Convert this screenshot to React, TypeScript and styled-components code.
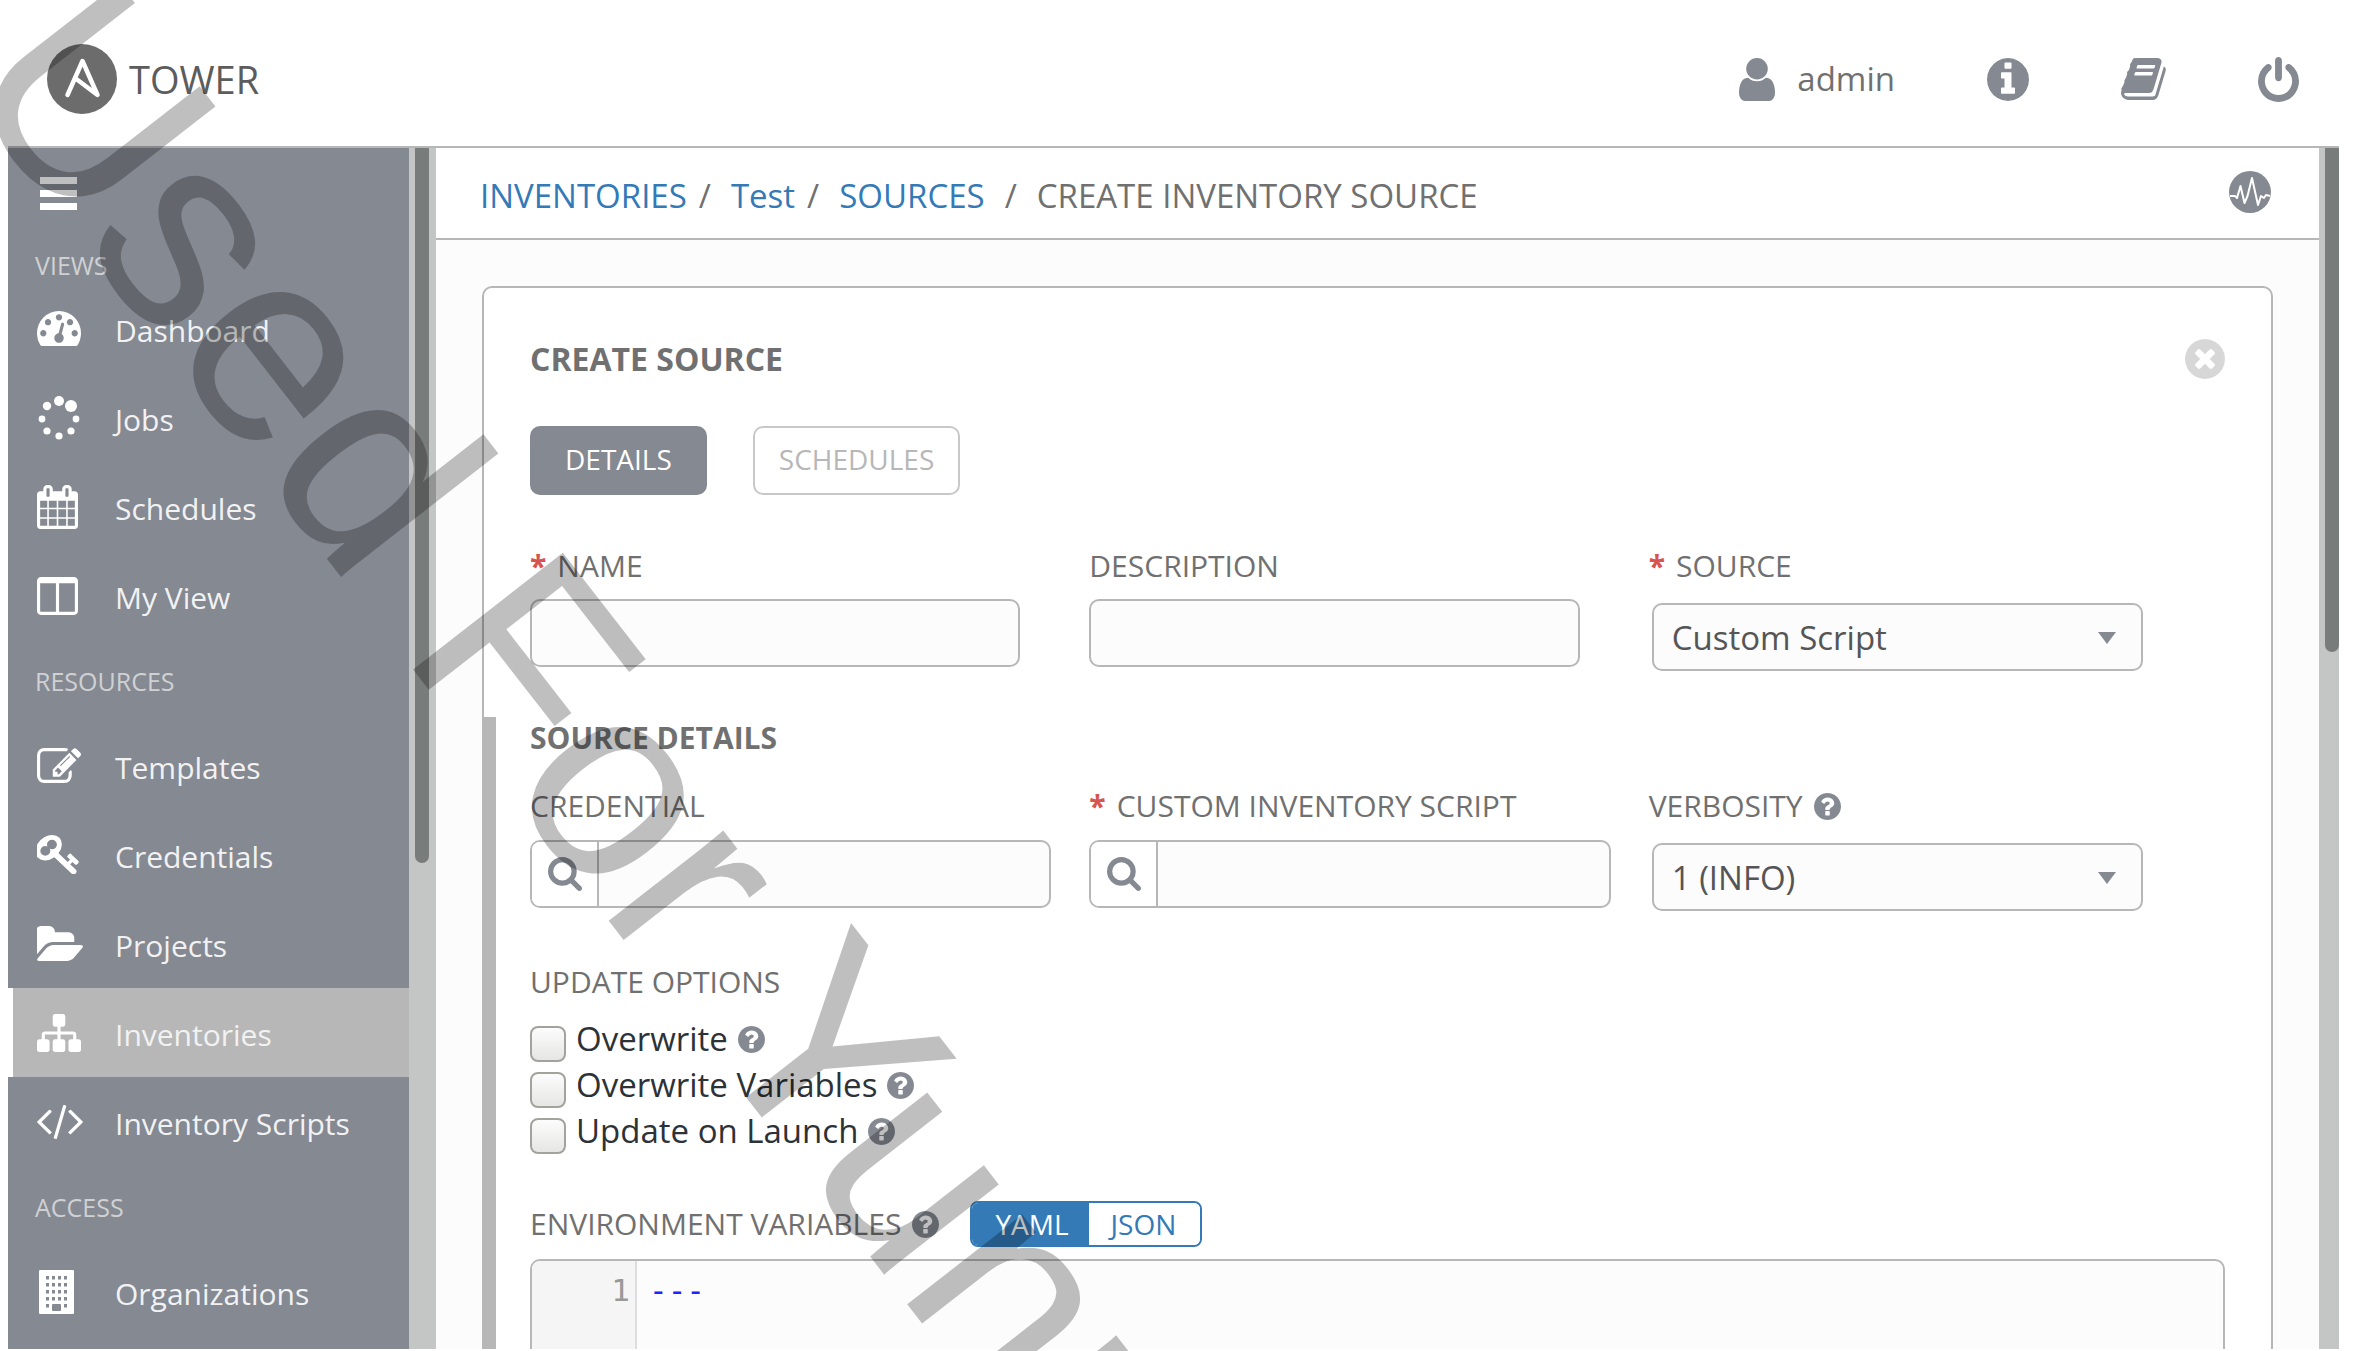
import React from 'react';
import styled, { createGlobalStyle } from 'styled-components';

const color = {
  slate: '#848992',
  line: '#b7b7b7',
  text: '#707070',
  link: '#337ab7',
  field: '#fcfcfc',
  track: '#c4c6c5',
  thumb: '#787c7b',
};

const GlobalStyle = createGlobalStyle`
  *, *::before, *::after { box-sizing: border-box; }
  body { margin: 0; background: #fff; }
  body, button, input, select { font-family: "Open Sans", "Noto Sans", sans-serif; }
`;

/* ---------- icons ---------- */

const CIRCLE =
  'M1664 896q0 209-103 385.5t-279.5 279.5-385.5 103-385.5-103-279.5-279.5-103-385.5 103-385.5 279.5-279.5 385.5-103 385.5 103 279.5 279.5 103 385.5z';

type Glyph = { box: string; w: number; h: number; d: string };

const glyphs: Record<string, Glyph> = {
  dashboard: {
    box: '0 256 1792 1408', w: 44, h: 35,
    d: 'M384 1152q0-53-37.5-90.5t-90.5-37.5-90.5 37.5-37.5 90.5 37.5 90.5 90.5 37.5 90.5-37.5 37.5-90.5zm192-448q0-53-37.5-90.5t-90.5-37.5-90.5 37.5-37.5 90.5 37.5 90.5 90.5 37.5 90.5-37.5 37.5-90.5zm428 481l101-382q6-26-7.5-48.5t-38.5-29.5-48 6.5-30 39.5l-101 382q-60 5-107 43.5t-63 98.5q-20 77 20 146t117 89 146-20 89-117q16-60-6-117t-72-91zm660-33q0-53-37.5-90.5t-90.5-37.5-90.5 37.5-37.5 90.5 37.5 90.5 90.5 37.5 90.5-37.5 37.5-90.5zm-640-640q0-53-37.5-90.5t-90.5-37.5-90.5 37.5-37.5 90.5 37.5 90.5 90.5 37.5 90.5-37.5 37.5-90.5zm448 192q0-53-37.5-90.5t-90.5-37.5-90.5 37.5-37.5 90.5 37.5 90.5 90.5 37.5 90.5-37.5 37.5-90.5zm320 448q0 261-141 483-19 29-54 29h-1402q-35 0-54-29-141-221-141-483 0-182 71-348t191-286 286-191 348-71 348 71 286 191 191 286 71 348z',
  },
  calendar: {
    box: '64 0 1664 1792', w: 41, h: 44,
    d: 'M192 1664h288v-288h-288v288zm352 0h320v-288h-320v288zm-352-352h288v-320h-288v320zm352 0h320v-320h-320v320zm-352-384h288v-288h-288v288zm736 736h320v-288h-320v288zm-384-736h320v-288h-320v288zm768 736h288v-288h-288v288zm-384-352h320v-320h-320v320zm-352-864v-288q0-13-9.5-22.5t-22.5-9.5h-64q-13 0-22.5 9.5t-9.5 22.5v288q0 13 9.5 22.5t22.5 9.5h64q13 0 22.5-9.5t9.5-22.5zm736 864h288v-320h-288v320zm-384-384h320v-288h-320v288zm384 0h288v-288h-288v288zm32-480v-288q0-13-9.5-22.5t-22.5-9.5h-64q-13 0-22.5 9.5t-9.5 22.5v288q0 13 9.5 22.5t22.5 9.5h64q13 0 22.5-9.5t9.5-22.5zm384-64v1280q0 52-38 90t-90 38h-1408q-52 0-90-38t-38-90v-1280q0-52 38-90t90-38h128v-96q0-66 47-113t113-47h64q66 0 113 47t47 113v96h384v-96q0-66 47-113t113-47h64q66 0 113 47t47 113v96h128q52 0 90 38t38 90z',
  },
  columns: {
    box: '0 128 1664 1536', w: 41, h: 38,
    d: 'M160 1536h608v-1152h-640v1120q0 13 9.5 22.5t22.5 9.5zm1376-32v-1120h-640v1152h608q13 0 22.5-9.5t9.5-22.5zm128-1216v1216q0 66-47 113t-113 47h-1344q-66 0-113-47t-47-113v-1216q0-66 47-113t113-47h1344q66 0 113 47t47 113z',
  },
  edit: {
    box: '0 128 1784 1408', w: 44, h: 35,
    d: 'M888 1184l116-116-152-152-116 116v56h96v96h56zm440-720q-16-16-33 1l-350 350q-17 17-1 33t33-1l350-350q17-17 1-33zm80 594v190q0 119-84.5 203.5t-203.5 84.5h-832q-119 0-203.5-84.5t-84.5-203.5v-832q0-119 84.5-203.5t203.5-84.5h832q63 0 117 25 15 7 18 23 3 17-9 29l-49 49q-14 14-32 8-23-6-45-6h-832q-66 0-113 47t-47 113v832q0 66 47 113t113 47h832q66 0 113-47t47-113v-126q0-13 9-22l64-64q15-15 35-7t20 29zm-96-738l288 288-672 672h-288v-288zm444 132l-92 92-288-288 92-92q28-28 68-28t68 28l152 152q28 28 28 68t-28 68z',
  },
  key: {
    box: '64 128 1620 1572', w: 42, h: 39,
    d: 'M832 512q0-80-56-136t-136-56-136 56-56 136q0 42 19 83-41-19-83-19-80 0-136 56t-56 136 56 136 136 56 136-56 56-136q0-42-19-83 41 19 83 19 80 0 136-56t56-136zm851 704q0 17-49 66t-66 49q-9 0-28.5-16t-36.5-33-38.5-40-24.5-26l-96 96 220 220q28 28 28 68 0 42-39 81t-81 39q-40 0-68-28l-671-671q-176 131-365 131-163 0-265.5-102.5t-102.5-265.5q0-160 95-313t248-248 313-95q163 0 265.5 102.5t102.5 265.5q0 189-131 365l355 355 96-96q-3-3-26-24.5t-40-38.5-33-36.5-16-28.5q0-17 49-66t66-49q13 0 23 10 6 6 46 44.5t82 79.5 86.5 86 73 78 28.5 41z',
  },
  folder: {
    box: '64 128 1816 1408', w: 46, h: 35,
    d: 'M1879 952q0 31-31 66l-336 396q-43 51-120.5 86.5t-143.5 35.5h-1088q-34 0-60.5-13t-26.5-43q0-31 31-66l336-396q43-51 120.5-86.5t143.5-35.5h1088q34 0 60.5 13t26.5 43zm-343-344v160h-832q-94 0-197 47.5t-164 119.5l-337 396-5 6q0-4-.5-12.5t-.5-12.5v-960q0-92 66-158t158-66h320q92 0 158 66t66 158v32h544q92 0 158 66t66 158z',
  },
  sitemap: {
    box: '0 128 1792 1536', w: 44, h: 38,
    d: 'M1792 1248v320q0 40-28 68t-68 28h-320q-40 0-68-28t-28-68v-320q0-40 28-68t68-28h96v-192h-512v192h96q40 0 68 28t28 68v320q0 40-28 68t-68 28h-320q-40 0-68-28t-28-68v-320q0-40 28-68t68-28h96v-192h-512v192h96q40 0 68 28t28 68v320q0 40-28 68t-68 28h-320q-40 0-68-28t-28-68v-320q0-40 28-68t68-28h96v-192q0-52 38-90t90-38h512v-192h-96q-40 0-68-28t-28-68v-320q0-40 28-68t68-28h320q40 0 68 28t28 68v320q0 40-28 68t-68 28h-96v192h512q52 0 90 38t38 90v192h96q40 0 68 28t28 68z',
  },
  code: {
    box: '-20 274 1832 1372', w: 46, h: 34,
    d: 'M553 1399l-50 50q-10 10-23 10t-23-10l-466-466q-10-10-10-23t10-23l466-466q10-10 23-10t23 10l50 50q10 10 10 23t-10 23l-393 393 393 393q10 10 10 23t-10 23zm591-1067l-373 1291q-4 13-15.5 19.5t-23.5 2.5l-62-17q-13-4-19.5-15.5t-2.5-24.5l373-1291q4-13 15.5-19.5t23.5-2.5l62 17q13 4 19.5 15.5t2.5 24.5zm657 651l-466 466q-10 10-23 10t-23-10l-50-50q-10-10-10-23t10-23l393-393-393-393q-10-10-10-23t10-23l50-50q10-10 23-10t23 10l466 466q10 10 10 23t-10 23z',
  },
  user: {
    box: '256 128 1280 1536', w: 36, h: 43,
    d: 'M1536 1399q0 109-62.5 187t-150.5 78h-854q-88 0-150.5-78t-62.5-187q0-85 8.5-160.5t31.5-152 58.5-131 94-89 134.5-34.5q131 128 313 128t313-128q76 0 134.5 34.5t94 89 58.5 131 31.5 152 8.5 160.5zm-256-887q0 159-112.5 271.5t-271.5 112.5-271.5-112.5-112.5-271.5 112.5-271.5 271.5-112.5 271.5 112.5 112.5 271.5z',
  },
  info: {
    box: '128 128 1536 1536', w: 42, h: 43,
    d: 'M1152 1376v-160q0-14-9-23t-23-9h-96v-512q0-14-9-23t-23-9h-320q-14 0-23 9t-9 23v160q0 14 9 23t23 9h96v320h-96q-14 0-23 9t-9 23v160q0 14 9 23t23 9h448q14 0 23-9t9-23zM1024 480v-160q0-14-9-23t-23-9h-192q-14 0-23 9t-9 23v160q0 14 9 23t23 9h192q14 0 23-9t9-23z' + CIRCLE,
  },
  book: {
    box: '62 128 1674 1536', w: 45, h: 42,
    d: 'M1703 478q40 57 18 129l-275 906q-19 64-76.5 107.5t-122.5 43.5h-923q-77 0-148.5-53.5t-99.5-131.5q-24-67-2-127 0-4 3-27t4-37q1-8-3-21.5t-3-19.5q2-11 8-21t16.5-23.5 16.5-23.5q23-38 45-91.5t30-91.5q3-10 .5-30t-.5-28q3-11 17-28t17-23q21-36 42-92t25-90q1-9-2.5-32t.5-28q4-13 22-30.5t22-22.5q19-26 42.5-84.5t27.5-96.5q1-8-3-25.5t-2-26.5q2-8 9-18t18-23 17-21q8-12 16.5-30.5t15-35 16-36 19.5-32 26.5-23.5 36-11.5 47.5 5.5l-1 3q38-9 51-9h761q74 0 114 56t18 130l-274 906q-36 119-71.5 153.5t-128.5 34.5h-869q-27 0-38 15-11 16-1 43 24 70 144 70h923q29 0 56-15.5t35-41.5l300-987q7-22 5-57 38 15 59 43zm-1064 2q-4 13 2 22.5t20 9.5h608q13 0 25.5-9.5t16.5-22.5l21-64q4-13-2-22.5t-20-9.5h-608q-13 0-25.5 9.5t-16.5 22.5zm-83 256q-4 13 2 22.5t20 9.5h608q13 0 25.5-9.5t16.5-22.5l21-64q4-13-2-22.5t-20-9.5h-608q-13 0-25.5 9.5t-16.5 22.5z',
  },
  power: {
    box: '128 0 1536 1664', w: 41, h: 45,
    d: 'M1664 896q0 156-61 298t-164 245-245 164-298 61-298-61-245-164-164-245-61-298q0-182 80.5-343t226.5-270q43-32 95.5-25t83.5 50q32 42 24.5 94.5t-49.5 84.5q-98 74-151.5 181t-53.5 228q0 104 40.5 198.5t109.5 163.5 163.5 109.5 198.5 40.5 198.5-40.5 163.5-109.5 109.5-163.5 40.5-198.5q0-121-53.5-228t-151.5-181q-42-32-49.5-84.5t24.5-94.5q31-43 84-50t95 25q146 109 226.5 270t80.5 343zm-640-768v640q0 52-38 90t-90 38-90-38-38-90v-640q0-52 38-90t90-38 90 38 38 90z',
  },
  close: {
    box: '128 128 1536 1536', w: 40, h: 40,
    d: 'M1277 1122q0-26-19-45l-181-181 181-181q19-19 19-45 0-27-19-46l-90-90q-19-19-46-19-26 0-45 19l-181 181-181-181q-19-19-45-19-27 0-46 19l-90 90q-19 19-19 46 0 26 19 45l181 181-181 181q-19 19-19 45 0 27 19 46l90 90q19 19 46 19 26 0 45-19l181-181 181 181q19 19 45 19 27 0 46-19l90-90q19-19 19-46z' + CIRCLE,
  },
  help: {
    box: '128 128 1536 1536', w: 27, h: 27,
    d: 'M1024 1376v-192q0-14-9-23t-23-9h-192q-14 0-23 9t-9 23v192q0 14 9 23t23 9h192q14 0 23-9t9-23zM1280 704q0-88-55.5-163t-138.5-116-170-41q-243 0-371 213-15 24 8 42l132 100q7 6 19 6 16 0 25-12 53-68 86-92 34-24 86-24 48 0 85.5 26t37.5 59q0 38-20 61t-68 45q-63 28-115.5 86.5t-52.5 125.5v36q0 14 9 23t23 9h192q14 0 23-9t9-23q0-19 21.5-49.5t54.5-49.5q32-18 49-28.5t46-35 44.5-48 28-60.5 12.5-81z' + CIRCLE,
  },
  search: {
    box: '64 128 1664 1664', w: 34, h: 34,
    d: 'M1216 832q0-185-131.5-316.5t-316.5-131.5-316.5 131.5-131.5 316.5 131.5 316.5 316.5 131.5 316.5-131.5 131.5-316.5zm512 832q0 52-38 90t-90 38q-54 0-90-38l-343-342q-179 124-399 124-143 0-273.5-55.5t-225-150-150-225-55.5-273.5 55.5-273.5 150-225 225-150 273.5-55.5 273.5 55.5 225 150 150 225 55.5 273.5q0 220-124 399l343 343q37 37 37 90z',
  },
};

const IconSvg = styled.svg`
  display: block;
  flex: none;
  fill: currentColor;
`;

function Icon({ name }: { name: string }) {
  if (name === 'jobs') {
    return (
      <IconSvg width="44" height="44" viewBox="0 0 44 44" aria-hidden="true">
        <circle cx="22" cy="5" r="5" />
        <circle cx="34" cy="10" r="6" />
        <circle cx="39" cy="23" r="3.4" />
        <circle cx="34" cy="35" r="3.6" />
        <circle cx="22" cy="40" r="3.6" />
        <circle cx="10" cy="35" r="3.6" />
        <circle cx="5" cy="23" r="3.4" />
        <circle cx="10" cy="10" r="4.2" />
      </IconSvg>
    );
  }
  if (name === 'building') {
    const cells = [];
    for (let r = 0; r < 5; r += 1) {
      for (let c = 0; c < 4; c += 1) {
        if (r < 4 || c === 0 || c === 3) {
          cells.push(<rect key={`${r}-${c}`} x={7 + c * 6} y={6 + r * 7} width="3" height="3.5" fill={color.slate} />);
        }
      }
    }
    return (
      <IconSvg width="38" height="44" viewBox="-2 0 38 44" aria-hidden="true">
        <rect width="35" height="44" rx="1" />
        {cells}
        <rect x="13" y="34" width="9" height="7" rx="1" fill={color.slate} />
      </IconSvg>
    );
  }
  const g = glyphs[name];
  return (
    <IconSvg width={g.w} height={g.h} viewBox={g.box} preserveAspectRatio="none" aria-hidden="true">
      <path fillRule="evenodd" d={g.d} />
    </IconSvg>
  );
}

/* ---------- shell ---------- */

const Page = styled.div`
  position: relative;
  display: flex;
  flex-direction: column;
  height: 100vh;
  padding: 0 20px 2px 8px;
  overflow: hidden;
  color: ${color.text};
  font-size: 33px;
`;

const Header = styled.header`
  display: flex;
  align-items: center;
  justify-content: space-between;
  height: 148px;
  flex: none;
  padding: 12px 40px 0 39px;
  border-bottom: 2px solid ${color.line};
`;

const Brand = styled.a`
  display: flex;
  align-items: center;
  gap: 12px;
  color: #5c5c5c;
  font-size: 38px;
  line-height: 48px;
  text-decoration: none;
`;

const HeaderNav = styled.nav`
  display: flex;
  align-items: center;
  gap: 92px;
`;

const HeaderLink = styled.a`
  display: flex;
  align-items: center;
  gap: 22px;
  color: ${color.slate};
  text-decoration: none;
`;

const UserName = styled.span`
  color: ${color.text};
  line-height: 44px;
`;

const Body = styled.div`
  display: flex;
  flex: 1;
  min-height: 0;
  overflow: hidden;
`;

const Track = styled.div<{ $width: number }>`
  width: ${(p) => p.$width}px;
  flex: none;
  padding-left: 6px;
  background: ${color.track};
`;

const Thumb = styled.div<{ $size: number }>`
  width: 14px;
  height: ${(p) => p.$size}%;
  border-radius: 0 0 7px 7px;
  background: ${color.thumb};
`;

/* ---------- sidebar ---------- */

const Sidebar = styled.nav`
  width: 401px;
  flex: none;
  overflow: hidden;
  background: ${color.slate};
  color: #fff;
`;

const MenuButton = styled.button`
  display: flex;
  flex-direction: column;
  gap: 6px;
  margin: 29px 0 0 32px;
  padding: 0;
  border: 0;
  background: none;
`;

const MenuBar = styled.span`
  width: 37px;
  height: 7px;
  background: #fff;
`;

const GroupTitle = styled.h2<{ $first: boolean }>`
  margin: 0;
  padding: ${(p) => (p.$first ? '38px 0 2px 27px' : '24px 0 23px 27px')};
  color: #d0d1d3;
  font-size: 25px;
  font-weight: 400;
  line-height: 34px;
`;

const List = styled.ul`
  margin: 0;
  padding: 0;
  list-style: none;
`;

const NavLink = styled.a<{ $active?: boolean }>`
  display: flex;
  align-items: center;
  height: 89px;
  padding-left: ${(p) => (p.$active ? 24 : 29)}px;
  border-left: ${(p) => (p.$active ? '5px solid #fff' : '0')};
  background: ${(p) => (p.$active ? color.line : 'transparent')};
  color: #fff;
  text-decoration: none;
`;

const NavIcon = styled.span`
  width: 78px;
  flex: none;
`;

const NavText = styled.span`
  padding-top: 4px;
  color: #f2f2f2;
  font-size: 30px;
  line-height: 42px;
`;

/* ---------- main ---------- */

const Main = styled.main`
  display: flex;
  flex-direction: column;
  flex: 1;
  min-width: 0;
  overflow: hidden;
  background: ${color.field};
`;

const CrumbBar = styled.div`
  display: flex;
  align-items: center;
  justify-content: space-between;
  height: 92px;
  flex: none;
  padding: 0 48px 2px 44px;
  border-bottom: 2px solid ${color.line};
  background: #fff;
`;

const Crumbs = styled.nav`
  display: flex;
  padding-top: 8px;
  line-height: 44px;
`;

const CrumbLink = styled.a`
  color: ${color.link};
  text-decoration: none;
`;

const Slash = styled.span<{ $wide?: boolean }>`
  margin: 0 20px 0 ${(p) => (p.$wide ? 20 : 12)}px;
`;

const IconButton = styled.button<{ $color: string }>`
  padding: 0;
  border: 0;
  background: none;
  color: ${(p) => p.$color};
`;

const Panel = styled.section`
  flex: none;
  margin: 46px 46px 0;
  border: 2px solid ${color.line};
  border-radius: 10px;
  background: #fff;
`;

const PanelTop = styled.div`
  padding: 50px 46px 46px;
`;

const TitleRow = styled.div`
  display: flex;
  align-items: center;
  justify-content: space-between;
  height: 42px;
`;

const Title = styled.h1`
  margin: 0;
  font-size: 32px;
  font-weight: 700;
  line-height: 42px;
`;

const Tabs = styled.div`
  display: flex;
  gap: 46px;
  margin: 46px 0 50px;
`;

const Tab = styled.button<{ $active?: boolean }>`
  height: 69px;
  padding: 0 ${(p) => (p.$active ? 33 : 24)}px 4px;
  border: 2px solid ${(p) => (p.$active ? color.slate : '#c8c8c8')};
  border-radius: 10px;
  background: ${(p) => (p.$active ? color.slate : '#fff')};
  color: ${(p) => (p.$active ? '#fff' : color.line)};
  font-size: 28px;
`;

const Fields = styled.div`
  display: grid;
  grid-template-columns: repeat(3, 33%);
`;

const Field = styled.div`
  min-width: 0;
`;

const Label = styled.label`
  display: flex;
  align-items: center;
  gap: 11px;
  color: ${color.text};
  font-size: 30px;
  line-height: 42px;
`;

const Required = styled.span`
  color: #d9534f;
  font-weight: 700;
`;

const TextInput = styled.input`
  display: block;
  width: calc(100% - 69px);
  height: 68px;
  margin-top: 12px;
  padding: 0 18px;
  border: 2px solid ${color.line};
  border-radius: 10px;
  background: ${color.field};
  font-size: 33px;
`;

const LookupBox = styled.div`
  display: flex;
  width: calc(100% - 38px);
  height: 68px;
  margin-top: 13px;
  border: 2px solid ${color.line};
  border-radius: 10px;
  background: ${color.field};
  overflow: hidden;
`;

const LookupButton = styled.button`
  width: 67px;
  flex: none;
  padding: 0 0 0 16px;
  border: 0;
  border-right: 2px solid ${color.line};
  background: #fff;
  color: ${color.slate};
`;

const LookupInput = styled.input`
  flex: 1;
  min-width: 0;
  padding: 0 18px;
  border: 0;
  background: transparent;
  font-size: 33px;
`;

const SelectBox = styled.div`
  position: relative;
  width: calc(100% - 68px);
  margin: 16px 0 0 3px;

  &::after {
    content: '';
    position: absolute;
    top: 29px;
    right: 27px;
    border: 9px solid transparent;
    border-top: 12px solid ${color.slate};
    border-bottom: 0;
    pointer-events: none;
  }
`;

const Select = styled.select`
  display: block;
  width: 100%;
  height: 68px;
  padding: 0 60px 0 18px;
  border: 2px solid ${color.line};
  border-radius: 10px;
  appearance: none;
  background: ${color.field};
  color: #555;
  font-size: 33px;
`;

const SourceDetails = styled.div`
  padding: 0 46px 46px 34px;
  border-left: 12px solid ${color.line};
`;

const SubTitle = styled.h2`
  margin: 0 0 26px;
  font-size: 30px;
  font-weight: 700;
  line-height: 42px;
`;

const Options = styled.fieldset`
  margin: 50px 0 0;
  padding: 0;
  border: 0;
`;

const Legend = styled.legend`
  margin-bottom: 13px;
  padding: 0;
  font-size: 30px;
  line-height: 42px;
`;

const Option = styled.div`
  display: flex;
  align-items: center;
  gap: 10px;
  height: 46px;
`;

const OptionLabel = styled.label`
  display: flex;
  gap: 10px;
  color: #2d3237;
  line-height: 46px;
`;

const Checkbox = styled.input`
  align-self: flex-end;
  width: 36px;
  height: 36px;
  margin: 0;
  border: 2px solid #a3a39c;
  border-radius: 8px;
  appearance: none;
  background: linear-gradient(#fcfcfc, #e6e6e4);
`;

const EnvRow = styled.div`
  display: flex;
  align-items: center;
  margin-top: 47px;
`;

const Toggle = styled.div`
  display: flex;
  height: 46px;
  margin-left: 31px;
  border: 2px solid ${color.link};
  border-radius: 8px;
  overflow: hidden;
`;

const ToggleButton = styled.button<{ $active?: boolean }>`
  padding: 0 ${(p) => (p.$active ? '20px 0 23px' : '24px 0 22px')};
  border: 0;
  background: ${(p) => (p.$active ? color.link : '#fff')};
  color: ${(p) => (p.$active ? '#fff' : color.link)};
  font-size: 28px;
  line-height: 42px;
`;

const Editor = styled.div`
  display: flex;
  height: 400px;
  margin-top: 12px;
  border: 2px solid ${color.line};
  border-radius: 10px;
  background: ${color.field};
  overflow: hidden;
  font-family: "DejaVu Sans Mono", monospace;
  font-size: 31px;
  line-height: 42px;
`;

const Gutter = styled.div`
  width: 105px;
  flex: none;
  padding: 8px 5px 0 0;
  border-right: 2px solid #ddd;
  background: #f5f5f5;
  color: #999;
  text-align: right;
`;

const Code = styled.textarea`
  flex: 1;
  padding: 8px 12px;
  border: 0;
  background: transparent;
  color: #2222ff;
  font: inherit;
  resize: none;
`;

const Watermark = styled.div`
  position: absolute;
  top: -151px;
  left: -43px;
  color: rgba(0, 0, 0, 0.25);
  font-family: "Liberation Sans", Arial, sans-serif;
  font-size: 276px;
  line-height: 276px;
  white-space: nowrap;
  transform: rotate(52.1deg);
  transform-origin: 0 233px;
  pointer-events: none;
`;

type Item = { icon: string; label: string; active?: boolean };

const groups: { title: string; items: Item[] }[] = [
  {
    title: 'VIEWS',
    items: [
      { icon: 'dashboard', label: 'Dashboard' },
      { icon: 'jobs', label: 'Jobs' },
      { icon: 'calendar', label: 'Schedules' },
      { icon: 'columns', label: 'My View' },
    ],
  },
  {
    title: 'RESOURCES',
    items: [
      { icon: 'edit', label: 'Templates' },
      { icon: 'key', label: 'Credentials' },
      { icon: 'folder', label: 'Projects' },
      { icon: 'sitemap', label: 'Inventories', active: true },
      { icon: 'code', label: 'Inventory Scripts' },
    ],
  },
  { title: 'ACCESS', items: [{ icon: 'building', label: 'Organizations' }] },
];

const options = ['Overwrite', 'Overwrite Variables', 'Update on Launch'];

function Lookup({ id, label }: { id: string; label: string }) {
  return (
    <LookupBox>
      <LookupButton type="button" aria-label={`Search ${label}`}>
        <Icon name="search" />
      </LookupButton>
      <LookupInput id={id} type="text" />
    </LookupBox>
  );
}

export default function App() {
  return (
    <Page>
      <GlobalStyle />
      <Header>
        <Brand href="#">
          <IconSvg width="70" height="70" viewBox="0 0 70 70" aria-hidden="true">
            <circle cx="35" cy="35" r="35" fill="#6c6c6c" />
            <path
              d="M20.500 51L35.500 17L50.500 51L28 34"
              fill="none"
              stroke="#fff"
              strokeWidth="4.500"
              strokeLinecap="round"
              strokeLinejoin="round"
            />
          </IconSvg>
          TOWER
        </Brand>
        <HeaderNav>
          <HeaderLink href="#">
            <Icon name="user" />
            <UserName>admin</UserName>
          </HeaderLink>
          <HeaderLink href="#" aria-label="About"><Icon name="info" /></HeaderLink>
          <HeaderLink href="#" aria-label="Documentation"><Icon name="book" /></HeaderLink>
          <HeaderLink href="#" aria-label="Log out"><Icon name="power" /></HeaderLink>
        </HeaderNav>
      </Header>

      <Body>
        <Sidebar>
          <MenuButton type="button" aria-label="Toggle menu">
            <MenuBar />
            <MenuBar />
            <MenuBar />
          </MenuButton>
          {groups.map((group, index) => (
            <div key={group.title}>
              <GroupTitle $first={index === 0}>{group.title}</GroupTitle>
              <List>
                {group.items.map((item) => (
                  <li key={item.label}>
                    <NavLink href="#" $active={item.active}>
                      <NavIcon><Icon name={item.icon} /></NavIcon>
                      <NavText>{item.label}</NavText>
                    </NavLink>
                  </li>
                ))}
              </List>
            </div>
          ))}
        </Sidebar>
        <Track $width={27}><Thumb $size={59.5} /></Track>

        <Main>
          <CrumbBar>
            <Crumbs aria-label="Breadcrumb">
              <CrumbLink href="#">INVENTORIES</CrumbLink>
              <Slash>/</Slash>
              <CrumbLink href="#">Test</CrumbLink>
              <Slash>/</Slash>
              <CrumbLink href="#">SOURCES</CrumbLink>
              <Slash $wide>/</Slash>
              <span>CREATE INVENTORY SOURCE</span>
            </Crumbs>
            <IconButton type="button" $color={color.slate} aria-label="Activity stream">
              <IconSvg width="42" height="42" viewBox="0 0 42 42" aria-hidden="true">
                <circle cx="21" cy="21" r="21" />
                <path
                  d="M1 25H6L8 27L11.500 15L15.500 32L18.500 25L23 7L29 34L32 25L35 27L37 24L41 25"
                  fill="none"
                  stroke="#fff"
                  strokeWidth="2"
                  strokeLinejoin="round"
                />
              </IconSvg>
            </IconButton>
          </CrumbBar>

          <Panel>
            <PanelTop>
              <TitleRow>
                <Title>CREATE SOURCE</Title>
                <IconButton type="button" $color="#d7d7d7" aria-label="Close">
                  <Icon name="close" />
                </IconButton>
              </TitleRow>
              <Tabs>
                <Tab type="button" $active>DETAILS</Tab>
                <Tab type="button">SCHEDULES</Tab>
              </Tabs>
              <Fields>
                <Field>
                  <Label htmlFor="name"><Required>*</Required>NAME</Label>
                  <TextInput id="name" type="text" />
                </Field>
                <Field>
                  <Label htmlFor="description">DESCRIPTION</Label>
                  <TextInput id="description" type="text" />
                </Field>
                <Field>
                  <Label htmlFor="source"><Required>*</Required>SOURCE</Label>
                  <SelectBox>
                    <Select id="source"><option>Custom Script</option></Select>
                  </SelectBox>
                </Field>
              </Fields>
            </PanelTop>

            <SourceDetails>
              <SubTitle>SOURCE DETAILS</SubTitle>
              <Fields>
                <Field>
                  <Label htmlFor="credential">CREDENTIAL</Label>
                  <Lookup id="credential" label="credential" />
                </Field>
                <Field>
                  <Label htmlFor="script"><Required>*</Required>CUSTOM INVENTORY SCRIPT</Label>
                  <Lookup id="script" label="custom inventory script" />
                </Field>
                <Field>
                  <Label htmlFor="verbosity">
                    VERBOSITY
                    <IconButton type="button" $color={color.slate} aria-label="Verbosity help">
                      <Icon name="help" />
                    </IconButton>
                  </Label>
                  <SelectBox>
                    <Select id="verbosity"><option>1 (INFO)</option></Select>
                  </SelectBox>
                </Field>
              </Fields>

              <Options>
                <Legend>UPDATE OPTIONS</Legend>
                {options.map((label) => (
                  <Option key={label}>
                    <OptionLabel>
                      <Checkbox type="checkbox" />
                      {label}
                    </OptionLabel>
                    <IconButton type="button" $color={color.slate} aria-label={`${label} help`}>
                      <Icon name="help" />
                    </IconButton>
                  </Option>
                ))}
              </Options>

              <EnvRow>
                <Label htmlFor="variables">
                  ENVIRONMENT VARIABLES
                  <IconButton type="button" $color={color.slate} aria-label="Environment variables help">
                    <Icon name="help" />
                  </IconButton>
                </Label>
                <Toggle>
                  <ToggleButton type="button" $active>YAML</ToggleButton>
                  <ToggleButton type="button">JSON</ToggleButton>
                </Toggle>
              </EnvRow>
              <Editor>
                <Gutter>1</Gutter>
                <Code id="variables" defaultValue="---" spellCheck={false} />
              </Editor>
            </SourceDetails>
          </Panel>
        </Main>
        <Track $width={20}><Thumb $size={42} /></Track>
      </Body>

      <Watermark aria-hidden="true">Used For Yunn</Watermark>
    </Page>
  );
}
